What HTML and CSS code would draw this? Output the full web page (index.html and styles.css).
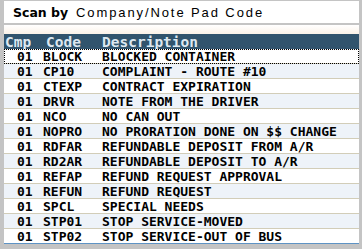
FILE: index.html
```
<!DOCTYPE html>
<html lang="en">
<head>
  <meta charset="UTF-8" />
  <title>Scan by Company/Note Pad Code</title>
  <link rel="stylesheet" href="styles.css">
</head>
<body>
  <div class="window">
    <div class="scan">
      <span class="scan-label">Scan by</span>
      <span class="scan-value">Company/Note Pad Code</span>
    </div>
    <div class="spacer"></div>

    <div class="grid">
      <div class="row head">
        <div class="cmp">Cmp</div><div class="code">Code</div><div class="desc">Description</div>
      </div>
      <div class="row focus">
        <div class="cmp">01</div><div class="code">BLOCK</div><div class="desc">BLOCKED CONTAINER</div>
      </div>
      <div class="row">
        <div class="cmp">01</div><div class="code">CP10</div><div class="desc">COMPLAINT - ROUTE #10</div>
      </div>
      <div class="row">
        <div class="cmp">01</div><div class="code">CTEXP</div><div class="desc">CONTRACT EXPIRATION</div>
      </div>
      <div class="row">
        <div class="cmp">01</div><div class="code">DRVR</div><div class="desc">NOTE FROM THE DRIVER</div>
      </div>
      <div class="row">
        <div class="cmp">01</div><div class="code">NCO</div><div class="desc">NO CAN OUT</div>
      </div>
      <div class="row">
        <div class="cmp">01</div><div class="code">NOPRO</div><div class="desc">NO PRORATION DONE ON $$ CHANGE</div>
      </div>
      <div class="row">
        <div class="cmp">01</div><div class="code">RDFAR</div><div class="desc">REFUNDABLE DEPOSIT FROM A/R</div>
      </div>
      <div class="row">
        <div class="cmp">01</div><div class="code">RD2AR</div><div class="desc">REFUNDABLE DEPOSIT TO A/R</div>
      </div>
      <div class="row">
        <div class="cmp">01</div><div class="code">REFAP</div><div class="desc">REFUND REQUEST APPROVAL</div>
      </div>
      <div class="row">
        <div class="cmp">01</div><div class="code">REFUN</div><div class="desc">REFUND REQUEST</div>
      </div>
      <div class="row">
        <div class="cmp">01</div><div class="code">SPCL</div><div class="desc">SPECIAL NEEDS</div>
      </div>
      <div class="row">
        <div class="cmp">01</div><div class="code">STP01</div><div class="desc">STOP SERVICE-MOVED</div>
      </div>
      <div class="row last">
        <div class="cmp">01</div><div class="code">STP02</div><div class="desc">STOP SERVICE-OUT OF BUS</div>
      </div>
    </div>
  </div>
</body>
</html>
```

FILE: styles.css
```
* {
  margin: 0;
  padding: 0;
  box-sizing: border-box;
}
body {
  background: #c4c4c4;
  width: 362px;
  height: 249px;
  overflow: hidden;
}
.window {
  padding: 1px 3px 0 4px;
}
.scan {
  height: 24px;
  background: #fff;
  border-bottom: 2px solid #c4c4c4;
  display: flex;
  align-items: center;
  padding-left: 9px;
}
.scan-label {
  font-family: "DejaVu Sans", sans-serif;
  font-weight: bold;
  font-size: 12.5px;
  color: #000;
  width: 63px;
}
.scan-value {
  font-family: "Liberation Sans", sans-serif;
  font-size: 13px;
  letter-spacing: 1.9px;
  color: #000;
}
.spacer {
  height: 9px;
  background: linear-gradient(#ffffff, #fbf2e8);
}
.grid {
  background: #fff;
}
.row {
  display: grid;
  grid-template-columns: 37px 59px 1fr;
  height: 15px;
  align-items: center;
  border-bottom: 1px solid #d2cdb8;
  font-family: "DejaVu Sans Mono", monospace;
  font-weight: bold;
  font-size: 13px;
  color: #000;
  white-space: nowrap;
}
.row:nth-child(odd) {
  background: #eef3f9;
}
.row .cmp {
  padding-left: 13px;
}
.row .code {
  padding-left: 2px;
}
.row .desc {
  padding-left: 2px;
}
.row.head {
  background: #31546d;
  color: #dce7f0;
  font-size: 14.5px;
  border-bottom: none;
}
.row.head .cmp {
  padding-left: 1px;
}
.row.head .code {
  padding-left: 5px;
}
.row.focus {
  outline: 1px dotted #000;
  outline-offset: -1px;
}
.row.last {
  border-bottom: 1px solid #5e93c4;
}
```
